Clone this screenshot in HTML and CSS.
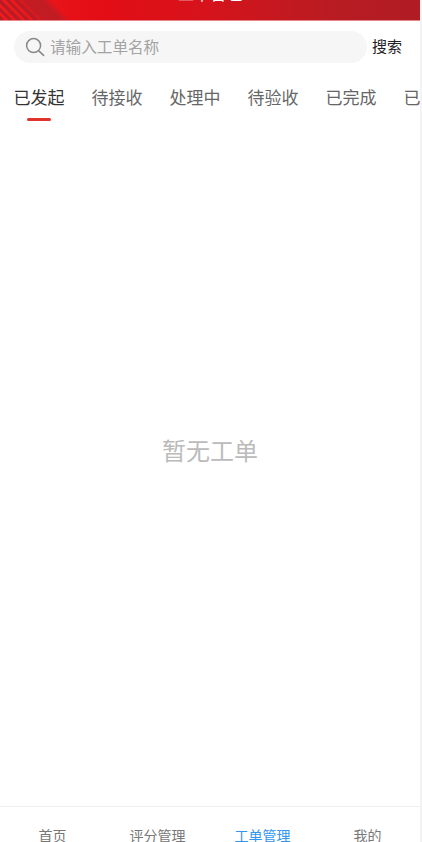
FILE: index.html
```html
<!DOCTYPE html>
<html lang="zh">
<head>
<meta charset="utf-8">
<title>工单管理</title>
<link rel="stylesheet" href="styles.css">
</head>
<body>
<div class="page">
  <header class="header"><h1 class="title">工单管理</h1></header>
  <div class="search-row">
    <div class="search-box">
      <svg class="search-icon" viewBox="0 0 20 20" width="20" height="20" aria-hidden="true">
        <circle cx="8.6" cy="8.6" r="7" fill="none" stroke="#8a8a8a" stroke-width="1.5"/>
        <path d="M13.8 13.8 L18.6 18.4" fill="none" stroke="#8a8a8a" stroke-width="1.6" stroke-linecap="round"/>
      </svg>
      <span class="placeholder">请输入工单名称</span>
    </div>
    <span class="search-btn">搜索</span>
  </div>
  <nav class="tabs">
    <div class="tab tab-active">已发起</div>
    <div class="tab">待接收</div>
    <div class="tab">处理中</div>
    <div class="tab">待验收</div>
    <div class="tab">已完成</div>
    <div class="tab">已关闭</div>
  </nav>
  <main class="empty">暂无工单</main>
  <footer class="bottom-nav">
    <div class="nav-item">首页</div>
    <div class="nav-item">评分管理</div>
    <div class="nav-item nav-active">工单管理</div>
    <div class="nav-item">我的</div>
  </footer>
</div>
</body>
</html>
```
FILE: styles.css
```css
* { box-sizing: border-box; }
html, body { margin: 0; height: 100%; overflow: hidden; background: #f3f3f3; }
body { font-family: "Noto Sans CJK SC", "Liberation Sans", sans-serif; }
.page {
  width: 420px; height: 842px; background: #fff; overflow: hidden;
  display: flex; flex-direction: column;
}
.header {
  height: 21px; flex: none; display: flex; justify-content: center; align-items: flex-start; overflow: hidden;
  background:
    linear-gradient(45deg, transparent 0 26px, rgba(190,28,36,.9) 31px 44px, transparent 50px),
    linear-gradient(45deg, #b91c26 0 3px, transparent 3px 6px, #b91c26 6px 9px, transparent 9px 12px, #b91c26 12px 15px, transparent 15px 18px, #b91c26 18px 21px, transparent 21px 24px, #b91c26 24px 27px, transparent 27px),
    linear-gradient(90deg, #ee1c1c 0, #e30d15 24%, #d5131b 50%, #b81c22 80%, #b01c24 100%);
  border-bottom: 1px solid #e9868a;
}
.title { margin: -15px 0 0; font-size: 16px; line-height: 16px; font-weight: 400; color: #fff; }
.search-row { flex: none; display: flex; align-items: center; padding: 10px 0 0 14px; }
.search-box {
  width: 353px; height: 32px; border-radius: 16px; background: #f6f6f6;
  display: flex; align-items: center; padding-left: 11px; gap: 5px;
}
.search-icon { flex: none; }
.placeholder { font-size: 15.6px; line-height: 20px; color: #a3a3a3; position: relative; top: -1px; }
.search-btn { margin-left: 5px; font-size: 15px; line-height: 20px; color: #222; position: relative; top: -1px; }
.tabs {
  flex: none; display: flex; gap: 27px; padding: 21px 0 0 13.5px; height: 70px; overflow: hidden;
}
.tab { flex: none; position: relative; font-size: 17px; line-height: 26px; height: 37px; color: #666; }
.tab-active { color: #333; }
.tab-active::after {
  content: ""; position: absolute; left: 13.5px; bottom: 0; width: 24px; height: 3px;
  border-radius: 2px; background: #e2322d;
}
.empty {
  flex: 1; display: flex; align-items: center; justify-content: center;
  font-size: 24px; color: #bbb; padding-bottom: 41px;
}
.bottom-nav {
  flex: none; height: 36px; border-top: 1px solid #eee; display: flex; padding-top: 18px;
}
.nav-item { flex: 1; text-align: center; font-size: 14px; line-height: 20px; color: #777; }
.nav-active { color: #2f95f0; }
```
